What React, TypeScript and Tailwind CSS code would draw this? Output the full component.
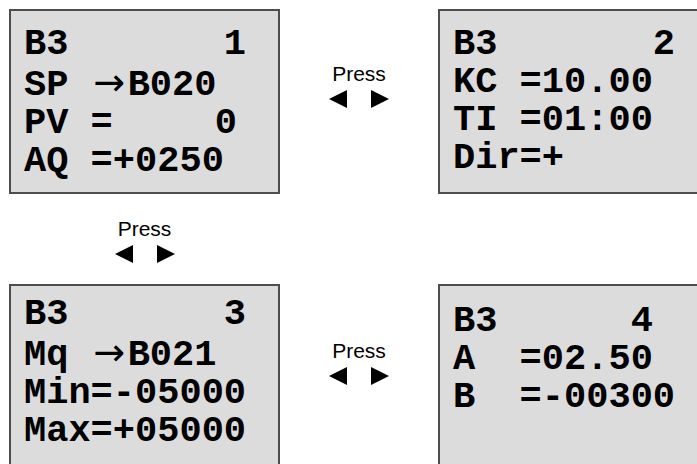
import React from "react";

const mono = { fontFamily: '"Liberation Mono", "Courier New", monospace' };

function Arrow() {
  return (
    <span
      className="inline-block w-[37px] text-center font-normal text-[38px] leading-[38px] align-baseline"
      style={{ fontFamily: '"DejaVu Sans", sans-serif' }}
    >
      →
    </span>
  );
}

function Tri({ dir }: { dir: "l" | "r" }) {
  return (
    <svg width="18" height="18" viewBox="0 0 18 18">
      {dir === "l" ? <polygon points="0,9 18,0 18,18" fill="#000" /> : <polygon points="18,9 0,0 0,18" fill="#000" />}
    </svg>
  );
}

function Press({ className = "" }: { className?: string }) {
  return (
    <div className={"flex flex-col items-center " + className}>
      <div className="text-[21px] leading-[24px] text-black" style={{ fontFamily: '"Liberation Sans", Arial, sans-serif' }}>
        Press
      </div>
      <div className="flex gap-[24px] mt-[4px]">
        <Tri dir="l" />
        <Tri dir="r" />
      </div>
    </div>
  );
}

function Box({ lines, pt }: { lines: React.ReactNode[]; pt: string }) {
  return (
    <div
      className={"w-[271px] h-[185px] shrink-0 border-2 border-[#4d4d4d] bg-[#dcdcdc] pl-[13px] text-black font-bold text-[37px] leading-[38px] whitespace-pre " + pt}
      style={mono}
    >
      {lines.map((l, i) => (
        <div key={i}>{l}</div>
      ))}
    </div>
  );
}

export default function App() {
  return (
    <div className="w-[697px] h-[464px] overflow-hidden bg-white pt-[9px] pl-[9px]">
      <div className="flex">
        <Box
          pt="pt-[14px]"
          lines={[
            "B3       1",
            <>SP <Arrow />B020</>,
            <>PV =<span className="inline-block w-[102px]" />0</>,
            "AQ =+0250",
          ]}
        />
        <div className="w-[158px] shrink-0 flex justify-center pt-[53px]">
          <Press />
        </div>
        <Box pt="pt-[14px]" lines={["B3       2", "KC =10.00", "TI =01:00", "Dir=+"]} />
      </div>
      <div className="h-[90px] w-[271px] flex justify-center pt-[23px]">
        <Press />
      </div>
      <div className="flex">
        <Box
          pt="pt-[9px]"
          lines={["B3       3", <>Mq <Arrow />B021</>, "Min=-05000", "Max=+05000"]}
        />
        <div className="w-[158px] shrink-0 flex justify-center pt-[55px]">
          <Press />
        </div>
        <Box pt="pt-[16px]" lines={["B3      4", "A  =02.50", "B  =-00300"]} />
      </div>
    </div>
  );
}
